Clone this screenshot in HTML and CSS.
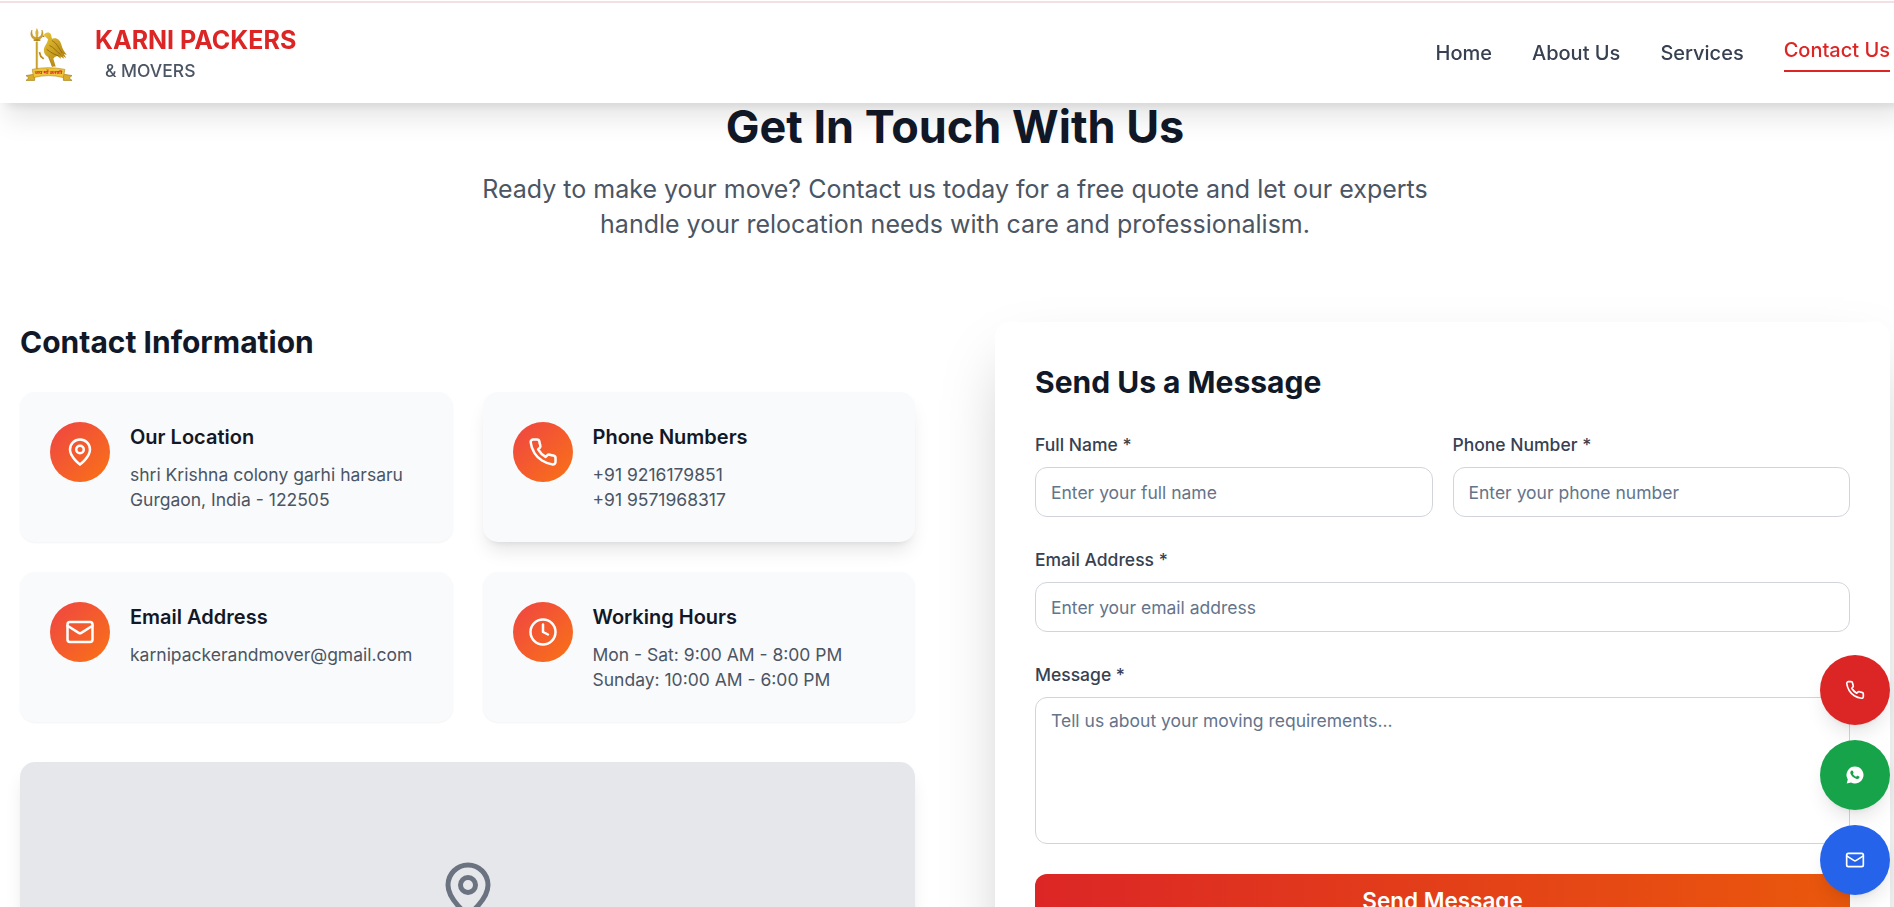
FILE: index.html
```html
<!DOCTYPE html>
<html lang="en">
<head>
<meta charset="utf-8">
<title>Karni Packers &amp; Movers - Contact Us</title>
<link rel="stylesheet" href="styles.css">
</head>
<body>
<svg class="sprite" aria-hidden="true">
  <symbol id="pin" viewBox="0 0 24 24"><path d="M20 10c0 6-8 12-8 12s-8-6-8-12a8 8 0 0 1 16 0Z"/><circle cx="12" cy="10" r="3"/></symbol>
  <symbol id="phone" viewBox="0 0 24 24"><path d="M22 16.92v3a2 2 0 0 1-2.18 2 19.79 19.79 0 0 1-8.63-3.07 19.5 19.5 0 0 1-6-6 19.79 19.79 0 0 1-3.07-8.67A2 2 0 0 1 4.11 2h3a2 2 0 0 1 2 1.72 12.84 12.84 0 0 0 .7 2.81 2 2 0 0 1-.45 2.11L8.09 9.91a16 16 0 0 0 6 6l1.27-1.27a2 2 0 0 1 2.11-.45 12.84 12.84 0 0 0 2.81.7A2 2 0 0 1 22 16.92z"/></symbol>
  <symbol id="mail" viewBox="0 0 24 24"><rect width="20" height="16" x="2" y="4" rx="2"/><path d="m22 7-8.97 5.7a1.94 1.94 0 0 1-2.06 0L2 7"/></symbol>
  <symbol id="clock" viewBox="0 0 24 24"><circle cx="12" cy="12" r="10"/><path d="M12 6v6l4 2"/></symbol>
</svg>

<header class="header">
  <div class="header-inner">
    <a class="brand">
      <svg class="logo" viewBox="0 0 48 60">
        <defs>
          <linearGradient id="gold" x1="0" y1="0" x2="1" y2="1"><stop offset="0" stop-color="#e9c53a"/><stop offset="1" stop-color="#a87908"/></linearGradient>
        </defs>
        <path d="M11.400 16V46" stroke="#c39a25" stroke-width="2.400"/>
        <path d="M11.800 16V46" stroke="#e8cf72" stroke-width=".8"/>
        <path d="M11.400 1.500l1.600 4.500-.7 9h-1.800l-.7-9z" fill="#d8b23c"/>
        <path d="M6.200 4c-2.200 4-1.400 9.500 5.200 10.200C18 13.500 18.800 8 16.600 4c.4 4.500-.8 7.500-5.200 8C7 11.500 5.800 8.500 6.200 4z" fill="#cda12b" stroke="#b5891b" stroke-width=".6"/>
        <path d="M8 14.500h7" stroke="#a87a13" stroke-width="1.500"/>
        <path d="M18.500 9.500c1-3.500 6-4.200 7.500-1 1 2.200.3 3.500 1.500 4.500 4.500-1.500 8 1 9.500 6.500 1 4 3 7 5.500 10.500l-3-1 2.500 4-3.500-2 1.500 3-4-2.500.5 2.500-4-3-2.500 1-1.500 2 2.500 8h-4l-1.500-9c-5-1-8-5.500-6.500-10.500 1-3 3.500-5 4-9z" fill="url(#gold)"/>
        <path d="M18.500 9.500l-1.500 1.500 2.500.5" fill="#b67f0c"/>
        <path d="M27 15c5 2 7 8 11 13M24.500 20c4.500 2 7 6 11.500 9.500M21.500 24c4 3 7 5 12.500 7" fill="none" stroke="#936607" stroke-width=".9"/>
        <path d="M14 27l1.500 4.500 3 2.500M24 32l4 10" fill="none" stroke="#bd8c19" stroke-width="1.800"/>
        <path d="M0 51.500l9-1.500v6.500H0l3-2.500zM48 51.500l-9-1.500v6.500h9l-3-2.500z" fill="#d9ad29" stroke="#a77c15" stroke-width=".7"/>
        <path d="M6.500 45q17-3.500 34 0l-1.500 8.500q-15.500-4-31 0z" fill="#efc437" stroke="#b18b24" stroke-width=".7"/>
        <text x="23.500" y="49.500" class="logo-text">जय माँ करणी</text>
      </svg>
      <span class="brand-words"><span class="brand-name">KARNI PACKERS</span><span class="brand-sub">&amp; MOVERS</span></span>
    </a>
    <nav class="nav"><a>Home</a><a>About Us</a><a>Services</a><a class="active">Contact Us</a></nav>
  </div>
</header>

<main class="page">
  <section class="intro">
    <h2>Get In Touch With Us</h2>
    <p>Ready to make your move? Contact us today for a free quote and let our experts handle your relocation needs with care and professionalism.</p>
  </section>
  <div class="columns">
    <section>
      <h3>Contact Information</h3>
      <div class="cards">
        <article class="card"><span class="badge"><svg class="icon"><use href="#pin"/></svg></span><div><h4>Our Location</h4><p>shri Krishna colony garhi harsaru<br>Gurgaon, India - 122505</p></div></article>
        <article class="card raised"><span class="badge"><svg class="icon"><use href="#phone"/></svg></span><div><h4>Phone Numbers</h4><p>+91 9216179851<br>+91 9571968317</p></div></article>
        <article class="card"><span class="badge"><svg class="icon"><use href="#mail"/></svg></span><div><h4>Email Address</h4><p>karnipackerandmover@gmail.com</p></div></article>
        <article class="card"><span class="badge"><svg class="icon"><use href="#clock"/></svg></span><div><h4>Working Hours</h4><p>Mon - Sat: 9:00 AM - 8:00 PM<br>Sunday: 10:00 AM - 6:00 PM</p></div></article>
      </div>
      <div class="map"><svg class="icon map-pin"><use href="#pin"/></svg></div>
    </section>
    <section class="form-card">
      <h3>Send Us a Message</h3>
      <form class="form">
        <div class="row">
          <label>Full Name *<input type="text" placeholder="Enter your full name"></label>
          <label>Phone Number *<input type="text" placeholder="Enter your phone number"></label>
        </div>
        <label>Email Address *<input type="text" placeholder="Enter your email address"></label>
        <label>Message *<textarea rows="5" placeholder="Tell us about your moving requirements..."></textarea></label>
        <button type="button" class="send">Send Message</button>
      </form>
    </section>
  </div>
</main>

<aside class="fabs">
  <a class="fab call"><svg class="icon"><use href="#phone"/></svg></a>
  <a class="fab chat"><svg class="chat-icon" viewBox="0 0 20 20"><path d="M10 1.500a8.500 8.500 0 1 1-4 16L1.700 18.500 2.800 14.500A8.500 8.500 0 0 1 10 1.500z" fill="#fff"/><path d="M6.300 5.800c.5-.6 1.300-.5 1.600.1l.7 1.500c.2.500-.5 1-.7 1.400.7 1.400 1.800 2.300 3.200 2.900.5-.3.900-1.200 1.400-1l1.700.8c.5.300.3 1.300-.2 1.800-.7.700-1.800.8-2.900.4-2.800-1-4.700-2.800-5.600-5-.4-1.200 0-2.200.8-2.900z" fill="#16a34a"/></svg></a>
  <a class="fab email"><svg class="icon"><use href="#mail"/></svg></a>
</aside>
</body>
</html>
```
FILE: styles.css
```css
* { box-sizing: border-box; margin: 0; padding: 0; }
html { font-size: 20px; overflow: hidden; }
body {
  width: 1910px;
  height: 907px;
  overflow: hidden;
  background: #fff;
  color: #111827;
  font-family: Inter, "Noto Sans", sans-serif;
  line-height: 1.5;
}
.sprite { display: none; }
.icon { width: 30px; height: 30px; fill: none; stroke: currentColor; stroke-width: 2; stroke-linecap: round; stroke-linejoin: round; }

.header {
  position: fixed;
  top: 1px;
  left: 0;
  z-index: 5;
  width: 1910px;
  height: 102px;
  background: #fff;
  border-top: 2px solid #f3dfe4;
  box-shadow: 0 20px 25px -5px rgba(0,0,0,.1), 0 8px 10px -6px rgba(0,0,0,.1);
}
.header-inner { width: 1890px; height: 100px; padding-left: 26px; display: flex; align-items: center; justify-content: space-between; }
.brand { display: flex; align-items: center; gap: 21px; }
.logo { width: 46px; height: 60px; margin: 4px 2px 0 0; }
.logo-text { font-size: 5.500px; font-weight: 700; fill: #dc2626; text-anchor: middle; }
.brand-words { display: flex; flex-direction: column; }
.brand-name { font-size: 25px; line-height: 35px; font-weight: 700; color: #dc2626; }
.brand-sub { padding-left: 10px; font-size: 17.5px; line-height: 25px; font-weight: 500; color: #4b5563; }
.nav { display: flex; align-items: center; gap: 40px; font-size: 20px; font-weight: 500; color: #374151; }
.active { padding-bottom: 5px; border-bottom: 2px solid #dc2626; color: #dc2626; }

.page { padding: 102px 20px 0; }
.intro { text-align: center; margin-bottom: 80px; }
.intro h2 { font-size: 45px; line-height: 50px; margin-bottom: 20px; }
.intro p { max-width: 960px; margin: 0 auto; font-size: 25px; line-height: 35px; color: #4b5563; }
.columns { display: grid; grid-template-columns: 1fr 1fr; gap: 80px; align-items: start; }
h3 { font-size: 30px; line-height: 40px; margin-bottom: 30px; }

.cards { display: grid; grid-template-columns: 1fr 1fr; gap: 30px; margin-bottom: 40px; }
.card { display: flex; gap: 20px; height: 150px; padding: 30px; border-radius: 15px; background: #f9fafb; box-shadow: 0 1px 2px rgba(0,0,0,.05); }
.raised { box-shadow: 0 12px 19px -4px rgba(0,0,0,.1), 0 5px 7px -5px rgba(0,0,0,.1); }
.badge { flex: none; display: grid; place-items: center; width: 60px; height: 60px; border-radius: 50%; color: #fff; background: linear-gradient(135deg, #ef4444, #f97316); }
.card h4 { font-size: 20px; line-height: 30px; font-weight: 600; margin-bottom: 10px; }
.card p { font-size: 17.5px; line-height: 25px; color: #4b5563; }
.map { height: 320px; padding-top: 98px; text-align: center; border-radius: 15px; background: #e5e7eb; color: #6b7280; box-shadow: 0 12px 19px -4px rgba(0,0,0,.1), 0 5px 7px -5px rgba(0,0,0,.1); }
.map-pin { width: 60px; height: 60px; }

.form-card { padding: 40px; border-radius: 15px; background: #fff; box-shadow: 0 31px 62px -15px rgba(0,0,0,.25); }
.form { display: flex; flex-direction: column; gap: 30px; }
.row { display: grid; grid-template-columns: 1fr 1fr; gap: 20px; }
label { display: block; font-size: 17.5px; line-height: 25px; font-weight: 500; color: #374151; }
input, textarea { display: block; width: 100%; margin-top: 10px; padding: 10px 15px; border: 1px solid #d1d5db; border-radius: 12px; background: #fff; font: 400 17.5px/25px Inter, sans-serif; resize: none; }
input { height: 50px; }
textarea { height: 147px; }
::placeholder { color: #64748b; opacity: 1; }
.send { height: 52px; border: 0; border-radius: 12px; color: #fff; font: 600 22.5px/35px Inter, sans-serif; background: linear-gradient(to right, #dc2626, #ea580c); }

.fabs { position: fixed; left: 1820px; top: 655px; z-index: 6; display: flex; flex-direction: column; gap: 15px; }
.fab { display: grid; place-items: center; width: 70px; height: 70px; border-radius: 50%; color: #fff; box-shadow: 0 12px 19px -4px rgba(0,0,0,.1), 0 5px 7px -5px rgba(0,0,0,.1); }
.fab .icon, .chat-icon { width: 20px; height: 20px; }
.call { background: #dc2626; }
.chat { background: #16a34a; }
.email { background: #2563eb; }
```
